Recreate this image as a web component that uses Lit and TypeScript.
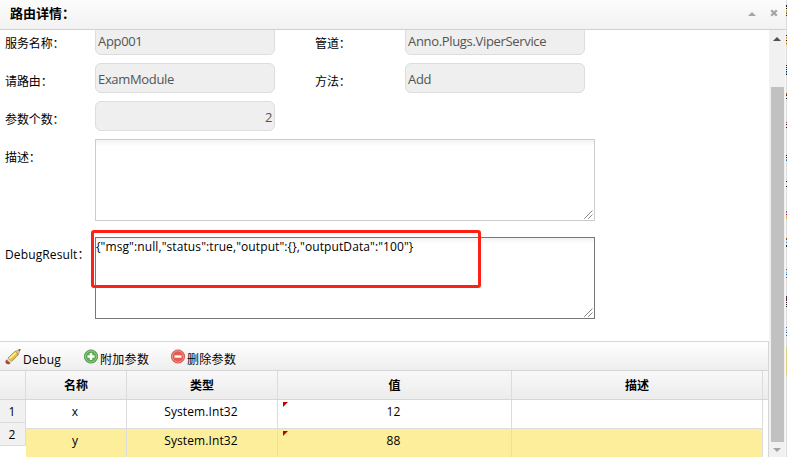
import { LitElement, html, css, svg } from "lit";
import { customElement } from "lit/decorators.js";

const specks: [number, number, string][] = [
  [5, 2, "#222"], [8, 1, "#222"], [10, 3, "#d8a03f"], [13, 1, "#555"], [15, 1, "#222"],
  [35, 1, "#222"], [37, 2, "#d8a03f"], [40, 1, "#222"], [42, 3, "#d8a03f"],
  [65, 1, "#222"], [67, 1, "#222"], [69, 1, "#222"], [71, 1, "#222"], [72, 2, "#3a9ad0"], [74, 1, "#222"],
  [93, 2, "#a75b35"], [95, 1, "#222"], [98, 1, "#222"],
  [122, 1, "#b44c40"], [124, 1, "#222"], [127, 1, "#222"],
  [155, 1, "#222"], [157, 1, "#222"], [159, 1, "#bb9c35"], [160, 1, "#178fae"],
  [181, 1, "#222"], [186, 1, "#222"],
  [211, 2, "#886ca0"], [214, 1, "#901c33"], [215, 4, "#e6b25a"],
  [238, 2, "#915721"], [242, 1, "#3a8bd0"], [245, 2, "#3d3420"],
  [269, 1, "#2676b4"], [272, 1, "#65a7dc"], [274, 1, "#1660a4"], [277, 1, "#2676b4"],
  [296, 5, "#59294e"], [302, 1, "#222"], [304, 1, "#222"], [306, 1, "#222"],
  [327, 1, "#2676b4"], [330, 1, "#65a7dc"], [332, 1, "#1660a4"], [335, 1, "#2676b4"],
  [347, 29, "#ddd07c"],
];

@customElement("app-root")
export class AppRoot extends LitElement {
  static styles = css`
    * { box-sizing: border-box; }
    :host {
      display: grid; grid-template-columns: 786px 1px; width: 787px; height: 457px;
      overflow: hidden; background: #fff; color: #000;
      font: 12px/18px "Open Sans", "Noto Sans CJK SC", sans-serif;
    }
    .window { display: flex; flex-direction: column; height: 457px; min-width: 0; }
    .title {
      flex: none; height: 30px; display: flex; align-items: center; padding: 0 8px 3px 10px;
      border-bottom: 1px solid #d0d0d0; background: linear-gradient(#fcfcfc, #f2f2f2);
      font: bold 13px/18px "Open Sans", "Noto Sans CJK SC", sans-serif;
    }
    .title span { flex: 1; }
    .up { margin: 2px 14px 0 0; }
    .main { flex: 1; min-height: 0; display: grid; grid-template-columns: 769px 17px; }
    .content { display: flex; flex-direction: column; overflow: hidden; min-width: 0; }
    .form {
      flex: none; height: 316px; margin-top: -5px; display: grid; align-content: start;
      grid-template-columns: 90px 220px 90px 180px; column-gap: 0; row-gap: 8px; padding-left: 5px;
    }
    .label { padding-top: 10px; white-space: nowrap; letter-spacing: -.1px; }
    .latin { padding-top: 9px; letter-spacing: .12px; }
    .input {
      width: 180px; height: 30px; border: 1px solid #ddd; border-radius: 6px; background: #efefef;
      color: #545454; font-size: 13px; line-height: 28px; padding: 1px 2px; white-space: nowrap;
      letter-spacing: -.33px;
    }
    .num { text-align: right; }
    .area {
      grid-column: 2 / 5; width: 500px; height: 82px; border: 1px solid #ccc; position: relative;
      background: linear-gradient(#f0f2f5, #fff 6px); padding: 0; white-space: nowrap;
      margin-bottom: 8px; letter-spacing: .1px;
    }
    .dark { border-color: #767676; }
    .grip { position: absolute; right: 1px; bottom: 1px; }
    .mark {
      position: absolute; left: -5px; top: -8px; width: 390px; height: 58px;
      border: 3px solid #ff2015; border-radius: 3px;
    }
    .grid { flex: 1; min-height: 0; border-top: 1px solid #d6d6d6; border-right: 1px solid #d6d6d6; }
    .toolbar {
      height: 28px; display: flex; padding-left: 5px; background: linear-gradient(#fff, #eee);
    }
    .tool { display: flex; padding-top: 7px; gap: 1px; }
    .tool span { padding-top: 2px; white-space: nowrap; letter-spacing: .3px; }
    .t1 { width: 78px; gap: 2px; }
    .t2 { width: 87px; }
    .head, .row { display: grid; grid-template-columns: 101px 151px 234px 251px; height: 29px; }
    .head {
      grid-template-columns: 26px 101px 151px 234px 251px 1fr; height: 30px; font-weight: bold;
      background: linear-gradient(#f8f8f8, #ececec);
      border-top: 1px solid #d6d6d6; border-bottom: 1px solid #d6d6d6;
    }
    .cell { border-right: 1px solid #dcdcdc; text-align: center; padding-top: 6px; position: relative; }
    .head .cell:last-child { border-right: 0; }
    .data { display: grid; grid-template-columns: 26px 737px; align-items: start; }
    .row .cell { border-bottom: 1px solid #dcdcdc; padding: 3px 2px 0 0; letter-spacing: .1px; }
    .sel { background: #fcee9b; }
    .idx {
      height: 23px; background: #f1f1f1; border-right: 1px solid #dcdcdc;
      border-bottom: 1px solid #dcdcdc; text-align: center; padding-top: 3px; padding-right: 1px;
    }
    .flag { position: absolute; left: 5px; top: 2px; }
    .scroll {
      background: #f1f1f1; display: flex; flex-direction: column; align-items: center;
      padding: 7px 0 5px; border-right: 1px solid #f8f8f8;
    }
    .thumb { width: 13px; height: 355px; margin: 46px 0 6px; background: #c1c1c1; margin-left: 1px; }
    .edge { background: #dcdcdc; }
    svg { display: block; flex: none; }
  `;

  grip() {
    return html`<svg class="grip" width="9" height="9"><path d="M.5 8.5l8-8M4.5 8.5l4-4" stroke="#444" stroke-dasharray="1.1 .3" fill="none"/></svg>`;
  }

  badge(c: string, edge: string, plus: boolean) {
    return html`<svg width="16" height="16" viewBox="0 0 16 16">
      <circle cx="8" cy="7.5" r="6.6" fill=${c} stroke=${edge} stroke-width=".8"/>
      <circle cx="8" cy="7.5" r="5.6" fill="none" stroke="#fff" stroke-opacity=".35"/>
      <path d=${plus ? "M4.5 7.5h7M8 4v7" : "M4.5 7.5h7"} stroke="#fff" stroke-width="2.4"/></svg>`;
  }

  row(name: string, value: string, sel = false) {
    return html`<div class="row ${sel ? "sel" : ""}">
      <div class="cell">${name}</div><div class="cell">System.Int32</div>
      <div class="cell"><svg class="flag" width="5" height="5"><path d="M0 0h5L0 5z" fill="#b00"/></svg>${value}</div>
      <div class="cell"></div></div>`;
  }

  render() {
    return html`
      <div class="window">
        <div class="title"><span>路由详情：</span>
          <svg class="up" width="8" height="4"><path d="M0 4L4 0l4 4z" fill="#a5a5a5"/></svg>
          <svg width="8" height="8"><path d="M1.2 1.2l5.6 5.6M6.8 1.2L1.2 6.8" stroke="#a5a5a5" stroke-width="2.3"/></svg>
        </div>
        <div class="main">
          <div class="content">
            <div class="form">
              <div class="label">服务名称：</div><div class="input">App001</div>
              <div class="label">管道：</div><div class="input">Anno.Plugs.ViperService</div>
              <div class="label">请路由：</div><div class="input">ExamModule</div>
              <div class="label">方法：</div><div class="input">Add</div>
              <div class="label">参数个数：</div><div class="input num">2</div><div></div><div></div>
              <div class="label">描述：</div><div class="area">${this.grip()}</div>
              <div class="label latin">DebugResult：</div>
              <div class="area dark">{"msg":null,"status":true,"output":{},"outputData":"100"}${this.grip()}<div class="mark"></div></div>
            </div>
            <div class="grid">
              <div class="toolbar">
                <div class="tool t1"><svg width="16" height="16" viewBox="0 0 16 16">
                  <path d="M3 9L10 2.4l3.4 3.2L6.6 12.6z" fill="#e3c23a" stroke="#8a7428" stroke-width=".7"/>
                  <path d="M4.5 9.6l6.8-6.2" stroke="#fff29a" stroke-width="1.6"/>
                  <path d="M10 2.4L15.4 0l-2 5.6z" fill="#d8bd91" stroke="#86704c" stroke-width=".4"/><path d="M13.4.9l2-.9-.7 2z" fill="#333"/>
                  <path d="M1.6 10.4l4 3.6-1.4 1.2Q1.6 15.6.4 13.4.2 11.6 1.6 10.4z" fill="#a9483c"/><path d="M2.2 9.6l4 3.8" stroke="#d8d8d0" stroke-width="1.7"/>
                </svg><span>Debug</span></div>
                <div class="tool t2">${this.badge("#58ad50", "#3d863c", true)}<span>附加参数</span></div>
                <div class="tool">${this.badge("#e65b4e", "#c54840", false)}<span>删除参数</span></div>
              </div>
              <div class="head"><div class="cell"></div><div class="cell">名称</div><div class="cell">类型</div>
                <div class="cell">值</div><div class="cell">描述</div><div class="cell"></div></div>
              <div class="data">
                <div><div class="idx">1</div><div class="idx">2</div></div>
                <div>${this.row("x", "12")}${this.row("y", "88", true)}</div>
              </div>
            </div>
          </div>
          <div class="scroll">
            <svg width="8" height="4"><path d="M0 4l4-4 4 4z" fill="#505050"/></svg>
            <div class="thumb"></div>
            <svg width="8" height="4"><path d="M0 0l4 4 4-4z" fill="#a3a3a3"/></svg>
          </div>
        </div>
      </div>
      <svg class="edge" width="1" height="457">${specks.map(([y, h, c]) => svg`<rect y=${y} width="1" height=${h} fill=${c}/>`)}</svg>`;
  }
}
